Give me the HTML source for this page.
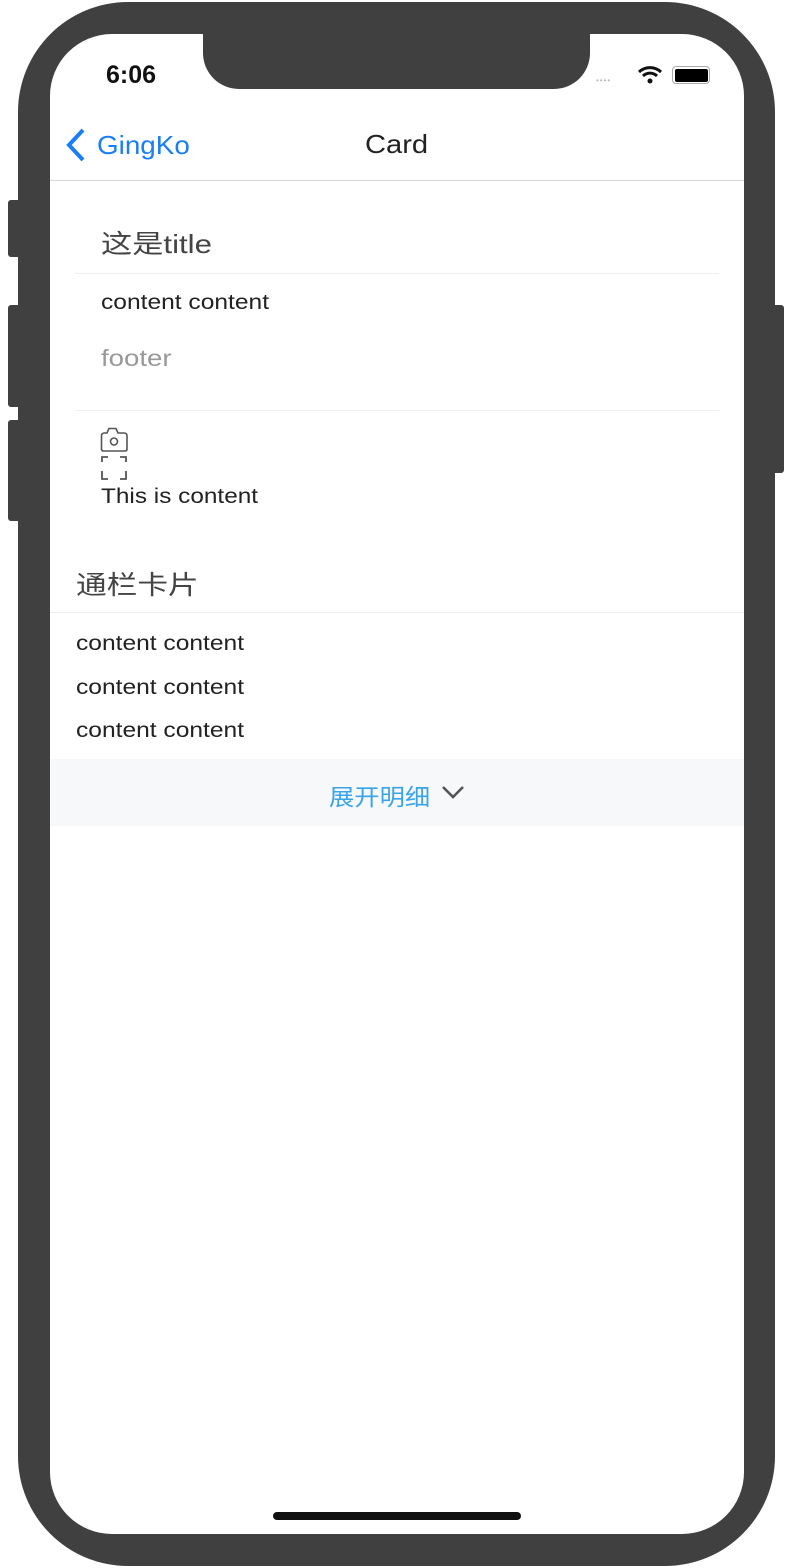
<!DOCTYPE html>
<html><head><meta charset="utf-8"><style>
*{margin:0;padding:0;box-sizing:border-box}
body{width:792px;height:1568px;background:#fff;position:relative;overflow:hidden;font-family:"Liberation Sans","Noto Sans CJK SC",sans-serif}
.a{position:absolute}
.btn{position:absolute;background:#404040;border-radius:3px}
.frame{left:18px;top:2px;width:757px;height:1564px;background:#404040;border-radius:110px}
.screen{left:50px;top:34px;width:694px;height:1500px;background:#fff;border-radius:62px;overflow:hidden}
.notch{left:203px;top:34px;width:387px;height:55px;background:#404040;border-radius:0 0 36px 36px}
.t{position:absolute;white-space:nowrap;transform-origin:left top;transform:scaleX(1.17)}
</style></head><body>
<div class="btn" style="left:8px;top:200px;width:14px;height:57px"></div>
<div class="btn" style="left:8px;top:305px;width:14px;height:102px"></div>
<div class="btn" style="left:8px;top:420px;width:14px;height:101px"></div>
<div class="btn" style="left:771px;top:305px;width:13px;height:168px"></div>
<div class="a frame"></div>
<div class="a screen"></div>
<div class="a notch"></div>
<div class="t" style="left:106px;top:61px;font-size:25px;font-weight:bold;color:#111;transform:none">6:06</div>
<div class="t" style="left:596px;top:76px;font-size:8px;color:#bbb;letter-spacing:1px;transform:none">••••</div>
<svg class="a" style="left:637px;top:65px" width="26" height="20" viewBox="0 0 26 20"><path d="M2 7 A16 16 0 0 1 24 7" stroke="#111" stroke-width="3" fill="none"/><path d="M6 11 A10 10 0 0 1 20 11" stroke="#111" stroke-width="3" fill="none"/><circle cx="13" cy="16" r="2.5" fill="#111"/></svg>
<div class="a" style="left:672px;top:66px;width:38px;height:18px;border:1.5px solid #aaa;border-radius:4px;padding:1.5px"><div style="width:100%;height:100%;background:#000;border-radius:2px"></div></div>
<svg class="a" style="left:64px;top:128px" width="24" height="34" viewBox="0 0 24 34"><path d="M19 2 L5 17 L19 32" stroke="#1a7ef5" stroke-width="4" fill="none"/></svg>
<div class="t" style="left:97px;top:130px;font-size:26px;color:#1a7ef5;transform:scaleX(1.07)">GingKo</div>
<div class="t" style="left:365px;top:129px;font-size:26px;color:#222;transform:scaleX(1.12)">Card</div>
<div class="a" style="left:50px;top:180px;width:694px;height:1px;background:#d8d8d8"></div>
<div class="t" style="left:101px;top:224px;font-size:26px;color:#444;transform:scaleX(1.2)">这是title</div>
<div class="a" style="left:75px;top:273px;width:644px;height:1px;background:#eee"></div>
<div class="t" style="left:101px;top:291px;font-size:21px;color:#222">content content</div>
<div class="t" style="left:101px;top:345px;font-size:23px;color:#999;transform:scaleX(1.2)">footer</div>
<div class="a" style="left:75px;top:410px;width:644px;height:1px;background:#eee"></div>
<svg class="a" style="left:100px;top:426px" width="30" height="56" viewBox="0 0 30 56"><path d="M1.5 10 Q1.5 7 4.5 7 H7 L9 2.5 H16 L18 7 H24 Q27 7 27 10 V23 Q27 25 25 25 H3.5 Q1.5 25 1.5 23 Z" stroke="#555" stroke-width="1.6" fill="none"/><circle cx="14" cy="15.5" r="3.5" stroke="#555" stroke-width="1.6" fill="none"/><path d="M2 36 V31 H8 M20 31 H26 V36 M2 45 V53 H8 M20 53 H26 V45" stroke="#555" stroke-width="1.8" fill="none"/></svg>
<div class="t" style="left:101px;top:485px;font-size:21px;color:#222;transform:scaleX(1.16)">This is content</div>
<div class="t" style="left:76px;top:565px;font-size:26px;color:#444;transform:scaleX(1.18)">通栏卡片</div>
<div class="a" style="left:50px;top:612px;width:694px;height:1px;background:#eee"></div>
<div class="t" style="left:76px;top:632px;font-size:21px;color:#222">content content</div>
<div class="t" style="left:76px;top:676px;font-size:21px;color:#222">content content</div>
<div class="t" style="left:76px;top:719px;font-size:21px;color:#222">content content</div>
<div class="a" style="left:50px;top:759px;width:694px;height:67px;background:#f7f8f9"></div>
<div class="t" style="left:329px;top:778px;font-size:23px;color:#3aa4ea;transform:scaleX(1.1)">展开明细</div>
<svg class="a" style="left:440px;top:783px" width="26" height="18" viewBox="0 0 26 18"><path d="M3 4 L13 14 L23 4" stroke="#555" stroke-width="2.6" fill="none"/></svg>
<div class="a" style="left:273px;top:1512px;width:248px;height:8px;background:#111;border-radius:4px"></div>
</body></html>
